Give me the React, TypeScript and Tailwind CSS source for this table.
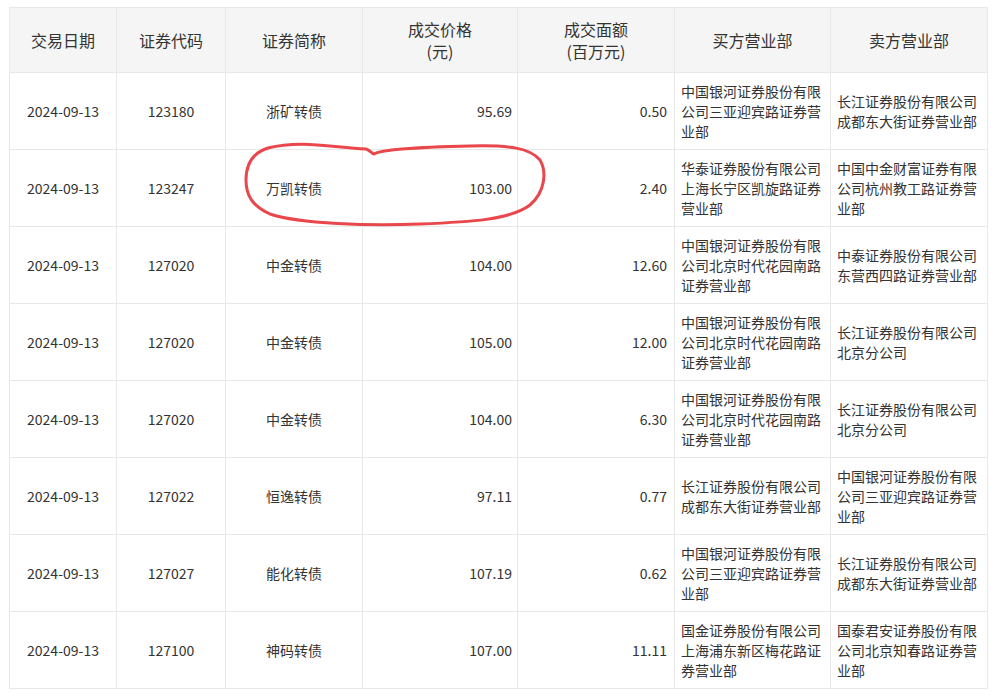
import React from 'react';

interface Trade {
  date: string;
  code: string;
  name: string;
  price: string;
  amount: string;
  buyer: string;
  seller: string;
}

const TRADES: Trade[] = [
  { date: '2024-09-13', code: '123180', name: '浙矿转债', price: '95.69', amount: '0.50', buyer: '中国银河证券股份有限公司三亚迎宾路证券营业部', seller: '长江证券股份有限公司成都东大街证券营业部' },
  { date: '2024-09-13', code: '123247', name: '万凯转债', price: '103.00', amount: '2.40', buyer: '华泰证券股份有限公司上海长宁区凯旋路证券营业部', seller: '中国中金财富证券有限公司杭州教工路证券营业部' },
  { date: '2024-09-13', code: '127020', name: '中金转债', price: '104.00', amount: '12.60', buyer: '中国银河证券股份有限公司北京时代花园南路证券营业部', seller: '中泰证券股份有限公司东营西四路证券营业部' },
  { date: '2024-09-13', code: '127020', name: '中金转债', price: '105.00', amount: '12.00', buyer: '中国银河证券股份有限公司北京时代花园南路证券营业部', seller: '长江证券股份有限公司北京分公司' },
  { date: '2024-09-13', code: '127020', name: '中金转债', price: '104.00', amount: '6.30', buyer: '中国银河证券股份有限公司北京时代花园南路证券营业部', seller: '长江证券股份有限公司北京分公司' },
  { date: '2024-09-13', code: '127022', name: '恒逸转债', price: '97.11', amount: '0.77', buyer: '长江证券股份有限公司成都东大街证券营业部', seller: '中国银河证券股份有限公司三亚迎宾路证券营业部' },
  { date: '2024-09-13', code: '127027', name: '能化转债', price: '107.19', amount: '0.62', buyer: '中国银河证券股份有限公司三亚迎宾路证券营业部', seller: '长江证券股份有限公司成都东大街证券营业部' },
  { date: '2024-09-13', code: '127100', name: '神码转债', price: '107.00', amount: '11.11', buyer: '国金证券股份有限公司上海浦东新区梅花路证券营业部', seller: '国泰君安证券股份有限公司北京知春路证券营业部' },
];

const th = 'border border-[#e8e8e8] bg-[#f5f5f5] font-normal text-[16px] leading-[22px] text-[#333] text-center align-middle';
const td = 'border border-[#e8e8e8] text-[14px] leading-[20px] text-[#333] align-middle';

export default function App() {
  return (
    <div
      className="bg-white w-[996px] h-[699px] overflow-hidden pl-[9px] pt-[7px]"
      style={{ fontFamily: '"Noto Sans CJK SC", "Noto Sans", sans-serif' }}
    >
      <div className="relative w-[978px]">
        <table className="w-[978px] table-fixed border-collapse">
          <colgroup>
            <col className="w-[107px]" />
            <col className="w-[109px]" />
            <col className="w-[137px]" />
            <col className="w-[155px]" />
            <col className="w-[157px]" />
            <col className="w-[156px]" />
            <col className="w-[157px]" />
          </colgroup>
          <thead>
            <tr className="h-[65px]">
              <th className={th}>交易日期</th>
              <th className={th}>证券代码</th>
              <th className={th}>证券简称</th>
              <th className={th}>成交价格<br />(元)</th>
              <th className={th}>成交面额<br />(百万元)</th>
              <th className={th}>买方营业部</th>
              <th className={th}>卖方营业部</th>
            </tr>
          </thead>
          <tbody>
            {TRADES.map((t, i) => (
              <tr key={i} className="h-[77px]">
                <td className={`${td} text-center`}>{t.date}</td>
                <td className={`${td} text-center`}>{t.code}</td>
                <td className={`${td} text-center`}>{t.name}</td>
                <td className={`${td} text-right pr-[5px]`}>{t.price}</td>
                <td className={`${td} text-right pr-[7px]`}>{t.amount}</td>
                <td className={`${td} text-left px-[6px]`}>{t.buyer}</td>
                <td className={`${td} text-left px-[6px]`}>{t.seller}</td>
              </tr>
            ))}
          </tbody>
        </table>

        {/* hand-drawn red ring around the 万凯 row */}
        <svg
          className="absolute left-0 top-0 pointer-events-none"
          width="978"
          height="300"
          viewBox="9 7 978 300"
        >
          <path
            d="M268 148 C 300 140, 330 147, 366 149 C 370 150, 372 154, 374 154 C 380 150, 420 147, 470 146 C 510 145, 530 148, 540 160 C 547 172, 545 192, 530 205 C 510 220, 470 222, 420 224 C 370 226, 300 224, 270 214 C 252 206, 246 195, 246 180 C 246 165, 252 153, 268 148 Z"
            fill="none"
            stroke="#e9474b"
            strokeWidth="3"
            strokeLinejoin="round"
          />
        </svg>
      </div>
    </div>
  );
}
